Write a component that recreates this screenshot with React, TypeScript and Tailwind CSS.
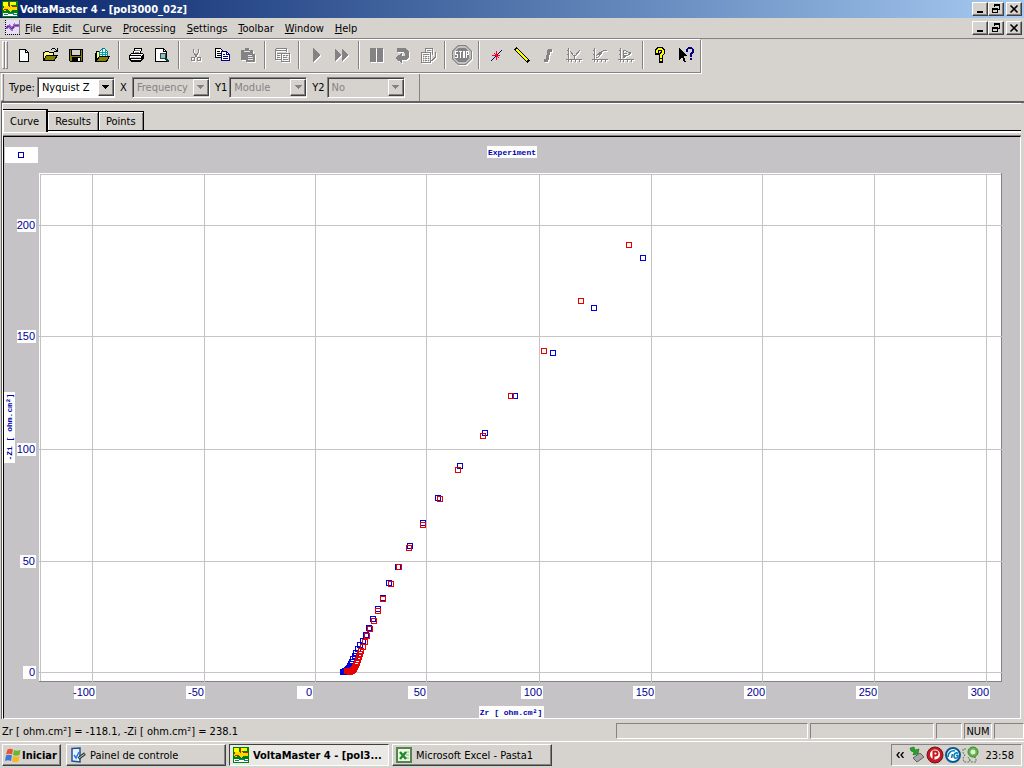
import React from 'react';
import clsx from 'clsx';

const raised =
  'border border-t-white border-l-white border-r-[#404040] border-b-[#404040] shadow-[inset_-1px_-1px_0_#848284]';
const sunken = 'border border-t-[#848284] border-l-[#848284] border-r-white border-b-white';

/* ---------- icons ---------- */

interface IconProps {
  size?: number;
  disabled?: boolean;
  children: React.ReactNode;
}

function Icon({ size = 16, disabled = false, children }: IconProps) {
  return (
    <svg
      viewBox="0 0 16 16"
      width={size}
      height={size}
      fill="none"
      shapeRendering="crispEdges"
      aria-hidden="true"
      className={clsx('shrink-0', disabled && 'drop-shadow-[1px_1px_0_#fff]')}
    >
      {children}
    </svg>
  );
}

const NewIcon = () => (
  <Icon>
    <path d="M3.5 2.5h6l3 3v9h-9z" fill="#fff" stroke="#000" />
    <path d="M9.5 2.5v3h3" stroke="#000" />
  </Icon>
);

const Folder = () => (
  <>
    <path d="M1.5 13.5v-8h1l1-1h3l1 1h4v3" fill="#ffff80" stroke="#000" />
    <path d="M1.5 13.5l3-5h11l-3.5 5z" fill="#848200" stroke="#000" />
  </>
);

const OpenIcon = () => (
  <Icon>
    <Folder />
    <path d="M9 2.5h1M10 1.5h3M13 2.5h1M14 3.5h1M15.5 1v4M12 4.5h4" stroke="#000" />
  </Icon>
);

const SaveIcon = () => (
  <Icon>
    <path d="M1.5 2.5h13v12h-12l-1-1z" fill="#848200" stroke="#000" />
    <path d="M4 3h8v5H4z" fill="#d6d3ce" />
    <path d="M3.5 3v5.500h9V3" stroke="#000" />
    <path d="M4 10h9v5H4z" fill="#000" />
    <path d="M10 11h2v3h-2z" fill="#fff" />
  </Icon>
);

const LoadIcon = () => (
  <Icon>
    <path d="M2.500 14V4.500h3l1 2" fill="#ffff80" stroke="#000" />
    <path d="M5.500 9V4.500l3-3h2l3 3V9z" fill="#fff" stroke="#008284" />
    <path d="M6 5.500h8M6 7.500h8M8.500 2v7M11.500 2v7" stroke="#00aaad" />
    <path d="M1.500 6v8.500h11l3-5h-10l-3 4" fill="#848200" stroke="#000" />
  </Icon>
);

const PrintIcon = () => (
  <Icon>
    <path d="M5.500 6.500l1-5h7l-1 5" fill="#fff" stroke="#000" />
    <path d="M7 3.500h5M7 5.500h4" stroke="#848284" />
    <path d="M1.500 8.500l2-2h11l1 1v4l-2 2h-10l-2-1z" fill="#fff" stroke="#000" />
    <path d="M2 8.500h11M2 11.500h11M13.500 9v5M14.500 8v4" stroke="#000" />
    <path d="M3 10h9" stroke="#c6c3c6" />
    <path d="M3 14.500h10" stroke="#000" />
  </Icon>
);

const PreviewIcon = () => (
  <Icon>
    <path d="M1.500 1.500h8l3 3v10h-11z" fill="#fff" stroke="#000" />
    <path d="M9.500 1.500v3h3" stroke="#000" />
    <circle cx="9" cy="9" r="3" fill="#84c3c6" stroke="#424142" />
    <path d="M11 11l4 4" stroke="#004142" strokeWidth="2" />
  </Icon>
);

const CutIcon = () => (
  <Icon disabled>
    <path d="M5.500 2v3l3 5M10.500 2v3l-3 5" stroke="#848284" />
    <circle cx="5" cy="12" r="2" stroke="#848284" />
    <circle cx="11" cy="12" r="2" stroke="#848284" />
  </Icon>
);

const CopyIcon = () => (
  <Icon>
    <path d="M1.500 1.500h5l2 2v7h-7z" fill="#fff" stroke="#000" />
    <path d="M3 4.500h3M3 6.500h4M3 8.500h4" stroke="#000" />
    <path d="M7.500 4.500h5l3 3v6h-8z" fill="#fff" stroke="#000084" />
    <path d="M12.500 5v2.500h3M9 7.500h2M9 9.500h5M9 11.500h5" stroke="#000084" />
  </Icon>
);

const PasteIcon = () => (
  <Icon disabled>
    <path d="M1 3h4V1h4v2h4v4h2v8H6v-2H1z" fill="#848284" />
    <path d="M4 4.500h6M8 8.500h4M8 10.500h5M8 12.500h5" stroke="#e7e7e7" />
  </Icon>
);

const PropertiesIcon = () => (
  <Icon disabled>
    <path d="M1.500 1.500h11v3M1.500 1.500v11h5M1 3.500h12M3 6.500h4M3 8.500h3M3 10.500h3" stroke="#848284" />
    <path d="M7.500 6.500h8v8h-8zM9 8.500h2M12 8.500h2M9 10.500h4M9 12.500h5" stroke="#848284" />
  </Icon>
);

const PlayIcon = () => (
  <Icon disabled>
    <path d="M5 1l8 7-8 7z" fill="#848284" />
  </Icon>
);

const ForwardIcon = () => (
  <Icon disabled>
    <path d="M1 2l7 6-7 6zM8 2l7 6-7 6z" fill="#848284" />
  </Icon>
);

const PauseIcon = () => (
  <Icon disabled>
    <path d="M2 1h6v14H2zM9 1h6v14H9z" fill="#848284" />
  </Icon>
);

const ReturnIcon = () => (
  <Icon disabled>
    <path d="M3 1h8l4 4v5l-3 3H8v3L1 11l7-5v3h3V6L9 5H3z" fill="#848284" />
  </Icon>
);

const CalcIcon = () => (
  <Icon disabled>
    <path d="M5.500 5V1.500h7V8M7 3.500h4" stroke="#848284" />
    <path d="M1.500 5.500h9v10h-9zM3 7.500h6M3 9.500h1M5 9.500h2M8 9.500h1M3 11.500h1M5 11.500h2M8 11.500h1M3 13.500h1M5 13.500h2M8 13.500h1" stroke="#848284" />
    <path d="M15.500 5v5l-4 4" stroke="#848284" strokeWidth="2" />
  </Icon>
);

const StopIcon = () => (
  <svg viewBox="0 0 20 20" width="20" height="20" aria-hidden="true" className="shrink-0 drop-shadow-[1px_1px_0_#fff]">
    <path d="M6 .5h8L19.500 6v8L14 19.500H6L.5 14V6z" fill="#848284" stroke="#848284" />
    <path d="M6.500 2h7L18 6.500v7L13.500 18h-7L2 13.500v-7z" fill="none" stroke="#fff" />
    <path
      d="M6 6.500H3.500v3h2v3H3M7 6.500h3M8.500 6.500V13M11.500 6.500h1v6h-1zM14.500 13V6.500h2v3h-2"
      fill="none"
      stroke="#fff"
      shapeRendering="crispEdges"
    />
  </svg>
);

const StarIcon = () => (
  <Icon>
    <path d="M3 14L14 3" stroke="#000084" />
    <path d="M8.500 4v9M4 8.500h8M6 6l5 5" stroke="#ff0029" />
  </Icon>
);

const PenIcon = () => (
  <Icon>
    <path d="M2.500 2.500l11 11" stroke="#000" strokeWidth="4" strokeLinecap="round" />
    <path d="M2.500 2.500l11 11" stroke="#ffff00" strokeWidth="2" />
  </Icon>
);

const IntegralIcon = () => (
  <Icon disabled>
    <path d="M12 3H9L7 13H4" stroke="#848284" strokeWidth="3" />
  </Icon>
);

const Axes = () => <path d="M2.500 1v14M0 12.500h16M1 3.500h1M1 7.500h1M5.500 13v2M9.500 13v2M13.500 13v2" stroke="#848284" />;

const ValleyIcon = () => (
  <Icon disabled>
    <Axes />
    <path d="M4 4l4 5h1l5-6M8.500 8v4" stroke="#848284" />
  </Icon>
);

const RiseIcon = () => (
  <Icon disabled>
    <Axes />
    <path d="M4 11l2-1 5-6 4-1M4 9l6-5" stroke="#848284" />
  </Icon>
);

const FitIcon = () => (
  <Icon disabled>
    <Axes />
    <path d="M5 3l8 3-8 5zM5 6h4M5 8h3" stroke="#848284" />
  </Icon>
);

const question = 'M2 5.500V3.500L3.500 2h3L8 3.500V6L5.500 8v2.500M5.500 12v2';

const HelpIcon = () => (
  <Icon>
    <path d={question} transform="translate(3 0)" stroke="#000" strokeWidth="4" strokeLinecap="square" />
    <path d={question} transform="translate(3 0)" stroke="#ffff00" strokeWidth="2" />
  </Icon>
);

const ContextHelpIcon = () => (
  <Icon>
    <path d="M1 1v12l3-3 2 5h2L6 9h4z" fill="#000" />
    <path d={question} transform="translate(7 -1)" stroke="#000084" strokeWidth="2" />
  </Icon>
);

const AppIcon = () => (
  <Icon>
    <path d="M0 0h16v16H0z" fill="#008200" />
    <path d="M1 1h5v4H1zM8 1h6v3H8z" fill="#ffff00" />
    <path d="M2 5h4l2-2 2 3h5v3h-4l-3 2-2-3-3 2-2-1z" fill="#ffd700" />
    <path d="M7 1v5M11 5h4M2 8h4" stroke="#c62000" />
    <path d="M1 12h14v3H1z" fill="#fff" />
    <path d="M2 13.500h3l2-1h4l1 1h3" stroke="#00829c" />
  </Icon>
);

const DocumentIcon = () => (
  <Icon>
    <path d="M1 0h15v14H1z" fill="#e7dff7" />
    <path d="M1.500 0v14.500H16" stroke="#000" strokeDasharray="1 1" />
    <path d="M15.500 0v14" stroke="#848284" />
    <path d="M2 8l3-2 3 3 3-4 4 1" stroke="#9c71c6" strokeWidth="3" />
    <path d="M2 8l3-2 3 3 3-4 4 1" stroke="#7330a5" />
  </Icon>
);

const WindowsIcon = () => (
  <svg viewBox="0 0 16 16" width="16" height="16" aria-hidden="true" className="shrink-0">
    <path d="M2.500 2.500Q5 1 8 2.500L7 7.500Q4 6 1 7.500z" fill="#e8542c" />
    <path d="M9 3q3 1.500 6.500 0l-1 5Q11 9.500 8 8z" fill="#6cb52d" />
    <path d="M1 8.500Q4 7 7 8.500l-1 5.500Q3 12.500 0 14z" fill="#3f74d8" />
    <path d="M8 9q3 1.500 6.500 0l-1 5.500Q10 16 7 14.500z" fill="#f4b824" />
  </svg>
);

const PanelIcon = () => (
  <svg viewBox="0 0 16 16" width="16" height="16" fill="none" aria-hidden="true" className="shrink-0">
    <path d="M2 1.500l8-.5v14l-8-1z" fill="#e7f3ff" stroke="#21519c" strokeWidth="1.500" />
    <path d="M4 8l2 3 3-6" stroke="#2979de" strokeWidth="1.500" />
    <path d="M8.500 11.500l6.500-5" stroke="#21415a" strokeWidth="3" />
    <path d="M9 11l5.500-4" stroke="#f7c352" />
  </svg>
);

const ExcelIcon = () => (
  <svg viewBox="0 0 16 16" width="16" height="16" aria-hidden="true" className="shrink-0">
    <path d="M1 1h14v14H1z" fill="#eff7e7" stroke="#52864a" strokeWidth="2" />
    <path d="M10 5h3M10 8h3M10 11h3" stroke="#84b684" />
    <path d="M4 5l6 7M10 5l-6 7" stroke="#218a31" strokeWidth="2.500" />
  </svg>
);

/* ---------- window chrome ---------- */

function WindowButtons() {
  const button = clsx('flex h-[14px] w-4 items-center justify-center bg-[#d6d3ce]', raised);
  return (
    <div className="flex">
      <button aria-label="Minimize" className={button}>
        <svg viewBox="0 0 12 10" width="12" height="10" shapeRendering="crispEdges">
          <path d="M3 7h6v2H3z" />
        </svg>
      </button>
      <button aria-label="Restore" className={button}>
        <svg viewBox="0 0 12 10" width="12" height="10" fill="none" stroke="#000" shapeRendering="crispEdges">
          <path d="M4.500 3V.5h5v5H8M4 1.500h6M2.500 4.500h5v4h-5zM2 5h6" />
        </svg>
      </button>
      <button aria-label="Close" className={clsx(button, 'ml-0.5')}>
        <svg viewBox="0 0 12 10" width="12" height="10" fill="none" stroke="#000" strokeWidth="1.6">
          <path d="M2.500 1.500l7 7M9.500 1.500l-7 7" />
        </svg>
      </button>
    </div>
  );
}

const menus = ['File', 'Edit', 'Curve', 'Processing', 'Settings', 'Toolbar', 'Window', 'Help'];

interface Tool {
  label: string;
  icon: React.ComponentType;
  disabled?: boolean;
}

const toolGroups: Tool[][] = [
  [
    { label: 'New', icon: NewIcon },
    { label: 'Open', icon: OpenIcon },
    { label: 'Save', icon: SaveIcon },
    { label: 'Load curve', icon: LoadIcon },
  ],
  [
    { label: 'Print', icon: PrintIcon },
    { label: 'Print preview', icon: PreviewIcon },
  ],
  [
    { label: 'Cut', icon: CutIcon, disabled: true },
    { label: 'Copy', icon: CopyIcon },
    { label: 'Paste', icon: PasteIcon, disabled: true },
  ],
  [{ label: 'Properties', icon: PropertiesIcon, disabled: true }],
  [
    { label: 'Run', icon: PlayIcon, disabled: true },
    { label: 'Skip', icon: ForwardIcon, disabled: true },
  ],
  [
    { label: 'Pause', icon: PauseIcon, disabled: true },
    { label: 'Reverse', icon: ReturnIcon, disabled: true },
    { label: 'Calculate', icon: CalcIcon, disabled: true },
  ],
  [{ label: 'Stop', icon: StopIcon, disabled: true }],
  [
    { label: 'Mark point', icon: StarIcon },
    { label: 'Draw line', icon: PenIcon },
    { label: 'Integrate', icon: IntegralIcon, disabled: true },
    { label: 'Minimum', icon: ValleyIcon, disabled: true },
    { label: 'Slope', icon: RiseIcon, disabled: true },
    { label: 'Fit', icon: FitIcon, disabled: true },
  ],
  [
    { label: 'Help', icon: HelpIcon },
    { label: 'Context help', icon: ContextHelpIcon },
  ],
];

function Grip() {
  return <span className="h-7 w-[3px] border border-t-white border-r-[#848284] border-b-[#848284] border-l-white" />;
}

function Toolbar() {
  return (
    <div className="relative flex h-[34px] w-fit items-center border-y border-r border-t-white border-r-[#848284] border-b-[#848284] pr-px pb-0.5 pl-0.5 shadow-[1px_1px_0_#fff]">
      <Grip />
      <Grip />
      <div className="flex pl-[3px]">
        {toolGroups.map((group, i) => (
          <div key={i} className="flex items-center">
            {i > 0 && <span className="mx-[3px] h-7 w-0.5 border-l border-[#848284] bg-white" />}
            {group.map(({ label, icon: ToolIcon, disabled }) => (
              <button key={label} aria-label={label} disabled={disabled} className="flex h-6 w-[26px] items-center justify-center">
                <ToolIcon />
              </button>
            ))}
          </div>
        ))}
      </div>
    </div>
  );
}

interface ComboProps {
  id: string;
  label: string;
  value: string;
  disabled?: boolean;
}

function Combo({ id, label, value, disabled = false }: ComboProps) {
  return (
    <div className="flex items-center gap-0.5">
      <label htmlFor={id} className="min-w-[10px]">{label}</label>
      <div className={clsx('relative w-[78px]', sunken)}>
        <select
          id={id}
          disabled={disabled}
          className={clsx(
            'block h-[19px] w-full appearance-none border-t border-l border-[#404040] pr-4 pl-[3px] opacity-100',
            disabled ? 'bg-[#d6d3ce] text-[#848284]' : 'bg-white text-black'
          )}
        >
          <option>{value}</option>
        </select>
        <span
          className={clsx(
            'pointer-events-none absolute inset-y-px right-0 flex w-4 items-center justify-center bg-[#d6d3ce]',
            raised
          )}
        >
          <svg viewBox="0 0 7 4" width="7" height="4" fill={disabled ? '#848284' : '#000'} shapeRendering="crispEdges">
            <path d="M0 0h7v1H0zM1 1h5v1H1zM2 2h3v1H2zM3 3h1v1H3z" />
          </svg>
        </span>
      </div>
    </div>
  );
}

const tabs = ['Curve', 'Results', 'Points'];

function Tabs() {
  return (
    <div role="tablist" className="flex h-[21px] items-end">
      {tabs.map((tab, i) => (
        <button
          key={tab}
          role="tab"
          aria-selected={i === 0}
          className={clsx(
            'border-t border-r border-black px-[7px]',
            i === 0
              ? 'relative z-10 h-[23px] self-start border-r-2 bg-[#d6d3ce] shadow-[inset_1px_1px_0_#fff]'
              : 'h-[19px] shadow-[inset_1px_1px_0_#fff,inset_-1px_0_0_#848284]'
          )}
        >
          {tab}
        </button>
      ))}
    </div>
  );
}

/* ---------- chart ---------- */

// `end` is the right edge of the label box
const xTicks = [
  { at: 92, label: '-100', width: 22, end: 96 },
  { at: 204, label: '-50', width: 19, end: 205 },
  { at: 315, label: '0', width: 16, end: 313 },
  { at: 426, label: '50', width: 19, end: 427 },
  { at: 539, label: '100', width: 22, end: 543 },
  { at: 651, label: '150', width: 22, end: 655 },
  { at: 762, label: '200', width: 22, end: 766 },
  { at: 874, label: '250', width: 22, end: 878 },
  { at: 986, label: '300', width: 22, end: 990 },
];

const yTicks = [
  { at: 225, label: '200', width: 19 },
  { at: 336, label: '150', width: 19 },
  { at: 449, label: '100', width: 19 },
  { at: 561, label: '50', width: 16 },
  { at: 672, label: '0', width: 13 },
];

const measured = [
  [643, 258], [594, 308], [553, 353], [515, 396], [485, 433], [460, 466], [438, 498], [423, 523],
  [410, 546], [398, 567], [389, 583], [383, 598], [378, 609], [373, 619], [369, 628], [366, 635],
  [363, 641], [360, 645], [358, 649], [356, 653], [355, 656], [353, 659], [352, 662], [351, 664],
  [350, 666], [349, 668], [348, 669], [347, 670], [346, 671], [345, 671], [344, 672], [343, 672],
];

const fitted = [
  [629, 245], [581, 301], [544, 351], [511, 396], [483, 436], [458, 470], [440, 499], [423, 525],
  [409, 548], [399, 567], [391, 584], [383, 599], [378, 611], [374, 621], [370, 629], [367, 636],
  [365, 642], [363, 647], [361, 651], [360, 654], [359, 657], [358, 660], [357, 663], [356, 665],
  [355, 667], [354, 669], [353, 670], [352, 671], [351, 671], [350, 672], [349, 671], [348, 671],
  [347, 671],
];

function Marker({ x, y, color }: { x: number; y: number; color: string }) {
  return <rect x={x - 2.5} y={y - 2.5} width="5" height="5" fill="none" stroke={color} />;
}

function NyquistChart() {
  return (
    <svg
      viewBox="4 137 1016 581"
      role="img"
      aria-label="Experiment"
      className="block h-auto w-full bg-[#c6c3c6]"
      shapeRendering="crispEdges"
    >
      {/* legend */}
      <rect x="5" y="147" width="33" height="16" fill="#fff" />
      <Marker x={21} y={155} color="#0000ad" />

      {/* plot area */}
      <rect x="39" y="173" width="963" height="509" fill="#fff" />
      <path d="M40.500 681V174.500H1001" fill="none" stroke="#c6c3c6" />
      <path d="M39 681.500H1001.500V173" fill="none" stroke="#848284" />
      {xTicks.map((tick) => (
        <path key={tick.label} d={`M${tick.at + 0.5} 174v509`} stroke="#c6c3c6" />
      ))}
      {yTicks.map((tick) => (
        <path key={tick.label} d={`M38 ${tick.at + 0.5}h964`} stroke="#c6c3c6" />
      ))}

      {measured.map(([x, y], i) => (
        <Marker key={i} x={x} y={y} color="#0000d6" />
      ))}
      {fitted.map(([x, y], i) => (
        <Marker key={i} x={x} y={y} color="#e70000" />
      ))}

      {/* tick labels */}
      <g className="fill-[#000094] font-['Liberation_Sans',sans-serif] text-[11px]" textAnchor="end">
        {xTicks.map((tick) => (
          <g key={tick.label}>
            <rect x={tick.end - tick.width} y="686" width={tick.width} height="13" fill="#fff" />
            <text x={tick.end - 1} y="696">{tick.label}</text>
          </g>
        ))}
        {yTicks.map((tick) => (
          <g key={tick.label}>
            <rect x={36 - tick.width} y={tick.at - 6} width={tick.width} height="13" fill="#fff" />
            <text x="35" y={tick.at + 4}>{tick.label}</text>
          </g>
        ))}
      </g>

      {/* titles */}
      <rect x="487" y="146" width="50" height="12" fill="#fff" />
      <rect x="479" y="706" width="65" height="12" fill="#fff" />
      <rect x="4" y="392" width="11" height="71" fill="#fff" />
      <g className="fill-[#0000ad] font-['Liberation_Mono',monospace] text-[8px] font-bold" textAnchor="middle">
        <text x="512" y="155">Experiment</text>
        <text x="511" y="715">Zr [ ohm.cm²]</text>
        <text transform="translate(12 427) rotate(-90)">-Zi [ ohm.cm²]</text>
      </g>
    </svg>
  );
}

/* ---------- bottom bars ---------- */

function StatusBar() {
  return (
    <footer className="flex h-[22px] items-center gap-0.5 pt-0.5">
      <p className="flex-1 pl-0.5">Zr [ ohm.cm²] = -118.1, -Zi [ ohm.cm²] = 238.1</p>
      <span className={clsx('h-4 w-48', sunken)} />
      <span className={clsx('h-4 w-[124px]', sunken)} />
      <span className={clsx('h-4 w-[26px]', sunken)} />
      <span className={clsx('flex h-4 w-7 items-center justify-center', sunken)}>NUM</span>
      <span className={clsx('h-4 w-[30px]', sunken)} />
    </footer>
  );
}

const tasks = [
  { label: 'Painel de controle', icon: PanelIcon },
  { label: 'VoltaMaster 4 - [pol3...', icon: AppIcon, active: true },
  { label: 'Microsoft Excel - Pasta1', icon: ExcelIcon },
];

function Taskbar() {
  return (
    <nav className="flex h-[27px] items-center border-t border-white px-0.5">
      <button className={clsx('mr-[5px] flex h-[22px] w-[59px] items-center gap-px px-0.5 font-bold', raised)}>
        <WindowsIcon />
        Iniciar
      </button>
      <div className="flex min-w-0 flex-1 gap-[3px]">
        {tasks.map(({ label, icon: TaskIcon, active }) => (
          <button
            key={label}
            className={clsx(
              'flex h-[22px] w-40 items-center gap-1 px-[3px] text-left whitespace-nowrap',
              active
                ? 'border border-t-[#404040] border-l-[#404040] border-r-white border-b-white bg-[#eae9e6] font-bold'
                : raised
            )}
          >
            <TaskIcon />
            {label}
          </button>
        ))}
      </div>
      <div className={clsx('flex h-[22px] w-[131px] items-center pl-1', sunken)}>
        <svg viewBox="0 0 8 6" width="8" height="6" fill="none" stroke="#000" className="mr-[5px]">
          <path d="M3.500 0L1 3l2.500 3M7.500 0L5 3l2.500 3" strokeWidth="1.300" />
        </svg>
        <svg viewBox="0 0 76 18" width="76" height="18" aria-hidden="true">
          {/* safe removal */}
          <path d="M4 12l7-5 4 4-7 5z" fill="#a5a6a5" stroke="#636163" />
          <path d="M1 2l4-1 1 3 4-1-1 5-5 1 1-3-3-1z" fill="#29a229" stroke="#086108" strokeWidth=".5" />
          {/* antivirus */}
          <circle cx="26" cy="9" r="8" fill="#c61821" stroke="#731018" />
          <circle cx="26" cy="8.500" r="5" fill="#fff" />
          <path d="M24.500 13V5.500h2a2 2 0 0 1 0 4h-2" fill="none" stroke="#c61821" strokeWidth="2" />
          {/* network */}
          <circle cx="44" cy="9" r="7" fill="#fff" stroke="#085994" strokeWidth="2" />
          <path
            d="M39 11c0-4 3-7 7-6M42.500 12l1-4M49 7.500c-2-1.500-4 0-4 2.500s2 3 4 1v-1.500h-2"
            fill="none"
            stroke="#087db5"
            strokeWidth="1.600"
          />
          {/* messenger */}
          <circle cx="64" cy="6" r="5" fill="#63b64a" stroke="#398a29" />
          <circle cx="64" cy="6" r="2.500" fill="#dff0d6" />
          <path
            d="M57 3h-3v4l2 2-2 3 1 4h5l1-3M59 11l3 5h5v-4l-3-1"
            fill="none"
            stroke="#5a7d52"
            strokeDasharray="2 1"
          />
        </svg>
        <time className="ml-auto pr-[7px]">23:58</time>
      </div>
    </nav>
  );
}

export default function App() {
  return (
    <div className="w-full bg-[#d6d3ce] font-['DejaVu_Sans_Condensed','DejaVu_Sans',sans-serif] text-[11px] leading-[13px] text-black">
      <header className="flex h-[18px] items-center gap-0.5 bg-linear-to-r from-[#0a246a] to-[#a6caf0] px-0.5 text-white">
        <AppIcon />
        <h1 className="flex-1 font-bold">VoltaMaster 4 - [pol3000_02z]</h1>
        <WindowButtons />
      </header>

      <nav className="flex h-[21px] items-center border-b border-[#848284] pr-0.5 pl-1">
        <DocumentIcon />
        <div className="flex flex-1 gap-[11px] pl-[5px]">
          {menus.map((name) => (
            <button key={name}>
              <span className="underline">{name[0]}</span>
              {name.slice(1)}
            </button>
          ))}
        </div>
        <WindowButtons />
      </nav>

      <Toolbar />

      <div className="flex h-7 w-[420px] items-center gap-[5px] border-r border-[#848284] pl-px">
        <Grip />
        <Combo id="type" label="Type:" value="Nyquist Z" />
        <Combo id="x-axis" label="X" value="Frequency" disabled />
        <Combo id="y1-axis" label="Y1" value="Module" disabled />
        <Combo id="y2-axis" label="Y2" value="No" disabled />
      </div>

      <main className="ml-px border-t-2 border-l border-[#636163] pr-[3px]">
        <div className="border-t border-l border-white pt-[5px]">
          <Tabs />
          <div className="border-t border-black">
            <div className="h-1 border-t-2 border-white" />
            <div className="border-t border-[#848284]">
              <div className="border border-t-black border-r-white border-b-white border-l-black">
                <NyquistChart />
              </div>
            </div>
          </div>
        </div>
      </main>

      <StatusBar />
      <Taskbar />
    </div>
  );
}
